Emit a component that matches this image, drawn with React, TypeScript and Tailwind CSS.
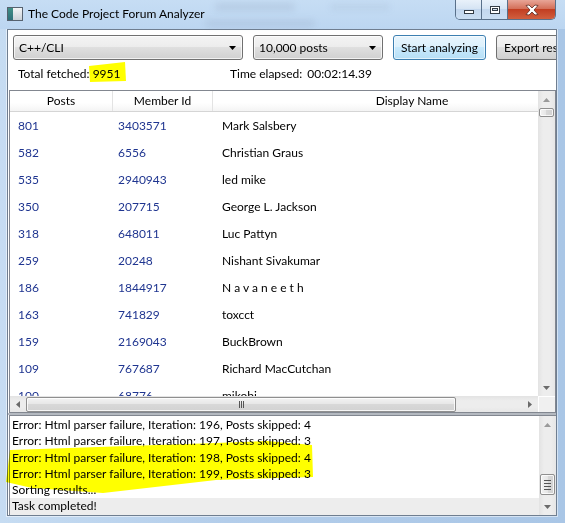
import React from "react";

const rows = [
  ["801", "3403571", "Mark Salsbery"],
  ["582", "6556", "Christian Graus"],
  ["535", "2940943", "led mike"],
  ["350", "207715", "George L. Jackson"],
  ["318", "648011", "Luc Pattyn"],
  ["259", "20248", "Nishant Sivakumar"],
  ["186", "1844917", "N a v a n e e t h"],
  ["163", "741829", "toxcct"],
  ["159", "2169043", "BuckBrown"],
  ["109", "767687", "Richard MacCutchan"],
  ["100", "68776", "mikobi"],
];

const log = [
  "Error: Html parser failure, Iteration: 196, Posts skipped: 4",
  "Error: Html parser failure, Iteration: 197, Posts skipped: 3",
  "Error: Html parser failure, Iteration: 198, Posts skipped: 4",
  "Error: Html parser failure, Iteration: 199, Posts skipped: 3",
  "Sorting results...",
];

function Tri({ dir }: { dir: "up" | "down" | "left" | "right" }) {
  if (dir === "left" || dir === "right") {
    return (
      <svg width="4" height="7" viewBox="0 0 4 7">
        <path d={dir === "left" ? "M4 0 L0 3.5 L4 7 Z" : "M0 0 L4 3.5 L0 7 Z"} fill="#6b6b6b" />
      </svg>
    );
  }
  return (
    <svg width="7" height="4" viewBox="0 0 7 4">
      <path d={dir === "up" ? "M0 4 L3.5 0 L7 4 Z" : "M0 0 L3.5 4 L7 0 Z"} fill={dir === "up" ? "#9a9a9a" : "#6b6b6b"} />
    </svg>
  );
}

function Combo({ label, className }: { label: string; className: string }) {
  return (
    <div
      className={`${className} h-[25px] flex items-center justify-between rounded-[3px] border border-[#707070] bg-[linear-gradient(#f4f4f4,#ececec_50%,#dfdfdf_50%,#d0d0d0)] pl-[5px] pr-[6px] shadow-[inset_0_0_0_1px_rgba(255,255,255,0.7)]`}
    >
      <span>{label}</span>
      <svg width="7" height="4" viewBox="0 0 7 4">
        <path d="M0 0 L3.5 4 L7 0 Z" fill="#000" />
      </svg>
    </div>
  );
}

function Thumb({ className, children }: { className: string; children?: React.ReactNode }) {
  return (
    <div
      className={`${className} flex items-center justify-center rounded-[2px] border border-[#8f8f8f] bg-[linear-gradient(90deg,#f3f3f3,#e6e6e6_50%,#d8d8d8_50%,#d2d2d2)] shadow-[inset_0_0_0_1px_rgba(255,255,255,0.8)]`}
    >
      {children}
    </div>
  );
}

export default function App() {
  return (
    <div className="relative w-[565px] h-[523px] overflow-hidden flex flex-col bg-[linear-gradient(90deg,#c6dcf2,#b3cdea_40%,#a9c6e6)] font-[Lato,'Liberation_Sans',sans-serif] text-[12px] text-black">
      {/* title bar */}
      <div className="relative h-[29px] flex items-start bg-[linear-gradient(#c6ddf4,#bcd6f1)]">
        <div className="absolute left-[215px] top-[3px] w-[80px] h-[8px] rounded-full bg-[#6f829a]/15 blur-[3px]" />
        <div className="absolute left-[205px] top-[20px] w-[110px] h-[7px] rounded-full bg-[#6f829a]/15 blur-[3px]" />
        <div className="absolute left-[330px] top-[4px] w-[60px] h-[6px] rounded-full bg-[#6f829a]/10 blur-[3px]" />
        <div className="mt-[7px] ml-[7px] w-[16px] h-[14px] border border-[#56626f] bg-[#dfe5ea] flex">
          <div className="w-[5px] bg-[linear-gradient(#3f8f86,#2f6f7a)]" />
          <div className="flex-1 bg-[linear-gradient(#f3f5f7,#c9d1d8)]" />
        </div>
        <span className="mt-[6px] ml-[5px] leading-[16px]">The Code Project Forum Analyzer</span>
        <div className="ml-auto mr-[9px] flex h-[20px] rounded-b-[5px] border border-t-0 border-[#59708a] overflow-hidden">
          <div className="w-[26px] flex items-center justify-center border-r border-[#59708a] bg-[linear-gradient(#e9f1fa,#d4e3f3_50%,#c3d7ee_50%,#cadef3)]">
            <div className="w-[10px] h-[4px] mt-[5px] border border-[#333c46] bg-white" />
          </div>
          <div className="w-[26px] flex items-center justify-center border-r border-[#59708a] bg-[linear-gradient(#e9f1fa,#d4e3f3_50%,#c3d7ee_50%,#cadef3)]">
            <div className="w-[10px] h-[8px] border border-[#333c46] bg-white flex items-center justify-center">
              <div className="w-[6px] h-[3px] border border-[#333c46] bg-[#cfdcea]" />
            </div>
          </div>
          <div className="w-[47px] flex items-center justify-center bg-[linear-gradient(#e8a597,#d4705a_45%,#c23e22_50%,#d15f3f)]">
            <svg width="14" height="12" viewBox="0 0 14 12">
              <path
                d="M1 1.5 L4 1 L7 4 L10 1 L13 1.5 L9 6 L13 10.5 L10 11 L7 8 L4 11 L1 10.5 L5 6 Z"
                fill="#fff"
                stroke="#5a2a22"
                strokeWidth="0.8"
              />
            </svg>
          </div>
        </div>
      </div>

      {/* client area */}
      <div className="ml-[7px] mr-[8px] h-[487px] border border-[#6f7e90] bg-white flex flex-col overflow-hidden shadow-[0_0_0_1px_rgba(255,255,255,0.5)]">
        {/* toolbar */}
        <div className="mt-[5px] ml-[5px] flex gap-[10px] h-[25px] shrink-0">
          <Combo label="C++/CLI" className="w-[230px] shrink-0" />
          <Combo label="10,000 posts" className="w-[130px] shrink-0" />
          <div className="w-[93px] shrink-0 h-[25px] flex items-center justify-center rounded-[3px] border border-[#3c7fb1] bg-[linear-gradient(#e8f5fd,#dbf0fc_50%,#c8e9fc_50%,#b6dff6)] shadow-[inset_0_0_0_1px_rgba(255,255,255,0.6)]">
            Start analyzing
          </div>
          <div className="w-[95px] shrink-0 h-[25px] flex items-center pl-[7px] rounded-[3px] border border-[#707070] bg-[linear-gradient(#f4f4f4,#ececec_50%,#dfdfdf_50%,#d0d0d0)] whitespace-nowrap overflow-hidden">
            Export results
          </div>
        </div>

        {/* stats */}
        <div className="h-[30px] shrink-0 flex items-center pl-[10px] pb-[2px]">
          <span className="w-[212px]">
            Total fetched: <span>9951</span>
          </span>
          <span>Time elapsed:</span>
          <span className="ml-[5px]">00:02:14.39</span>
        </div>

        {/* data grid */}
        <div className="ml-[1px] h-[323px] shrink-0 border border-[#828790] flex flex-col">
          <div className="flex h-[305px]">
            <div className="flex-1 overflow-hidden flex flex-col">
              <div className="h-[21px] shrink-0 flex border-b border-[#d5d5d5] bg-[linear-gradient(#ffffff,#ffffff_60%,#f4f4f4)] whitespace-nowrap">
                <div className="w-[103px] shrink-0 flex items-center justify-center border-r border-[#e3e3e3]">Posts</div>
                <div className="w-[100px] shrink-0 flex items-center justify-center border-r border-[#e3e3e3]">Member Id</div>
                <div className="w-[398px] shrink-0 flex items-center justify-center">Display Name</div>
              </div>
              <div className="flex-1 overflow-hidden">
                {rows.map((r) => (
                  <div key={r[0]} className="h-[27px] flex items-center whitespace-nowrap">
                    <div className="w-[103px] shrink-0 pl-[8px] text-[#1f3590]">{r[0]}</div>
                    <div className="w-[100px] shrink-0 pl-[5px] text-[#1f3590]">{r[1]}</div>
                    <div className="pl-[9px]">{r[2]}</div>
                  </div>
                ))}
              </div>
            </div>
            <div className="w-[17px] shrink-0 flex flex-col items-center bg-[linear-gradient(90deg,#e3e3e3,#ededed_30%,#ededed_70%,#e6e6e6)]">
              <div className="h-[17px] flex items-center justify-center">
                <Tri dir="up" />
              </div>
              <Thumb className="w-[15px] h-[9px]" />
              <div className="flex-1" />
              <div className="h-[17px] flex items-center justify-center">
                <Tri dir="down" />
              </div>
            </div>
          </div>
          <div className="flex h-[16px]">
            <div className="flex-1 flex items-center bg-[linear-gradient(#e3e3e3,#ededed_30%,#ededed_70%,#e6e6e6)]">
              <div className="w-[16px] flex items-center justify-center">
                <Tri dir="left" />
              </div>
              <div className="w-[430px] h-[15px] flex items-center justify-center rounded-[2px] border border-[#8f8f8f] bg-[linear-gradient(#f3f3f3,#e6e6e6_50%,#d8d8d8_50%,#d2d2d2)] shadow-[inset_0_0_0_1px_rgba(255,255,255,0.8)]">
                <div className="flex gap-[1px]">
                  <div className="w-[1px] h-[7px] bg-[#555]" />
                  <div className="w-[1px] h-[7px] bg-[#555]" />
                  <div className="w-[1px] h-[7px] bg-[#555]" />
                </div>
              </div>
              <div className="flex-1" />
              <div className="w-[17px] flex items-center justify-center">
                <Tri dir="right" />
              </div>
            </div>
            <div className="w-[17px] bg-[#f0f0f0] border-l border-t border-white" />
          </div>
        </div>

        {/* splitter */}
        <div className="h-[2px] shrink-0 bg-[#b4b9c0]" />

        {/* log */}
        <div className="ml-[1px] flex-1 border-t border-l border-[#828790] flex overflow-hidden">
          <div className="flex-1 flex flex-col pt-[1px]">
            {log.map((l) => (
              <div key={l} className="h-[16.3px] leading-[16px] pl-[2px] whitespace-nowrap">
                {l}
              </div>
            ))}
            <div className="flex-1 leading-[16px] pl-[2px] bg-[#ededed]">Task completed!</div>
          </div>
          <div className="w-[17px] shrink-0 flex flex-col items-center bg-[linear-gradient(90deg,#e3e3e3,#ededed_30%,#ededed_70%,#e6e6e6)]">
            <div className="h-[17px] flex items-center justify-center">
              <Tri dir="up" />
            </div>
            <div className="flex-1" />
            <Thumb className="w-[15px] h-[21px] mb-[3px] flex-col gap-[2px]">
              <div className="w-[7px] h-[1px] bg-[#555]" />
              <div className="w-[7px] h-[1px] bg-[#555]" />
              <div className="w-[7px] h-[1px] bg-[#555]" />
              <div className="w-[7px] h-[1px] bg-[#555]" />
            </Thumb>
            <div className="h-[17px] flex items-center justify-center">
              <Tri dir="down" />
            </div>
          </div>
        </div>
      </div>

      {/* marker highlights drawn over the screenshot */}
      <svg
        className="absolute inset-0 pointer-events-none mix-blend-multiply"
        width="565"
        height="523"
        viewBox="0 0 565 523"
      >
        <path d="M89 66 L125 62 L126 81 L90 82 Z" fill="#ffff00" />
        <path
          d="M10 450 L216 443 L267 441 L312 445 L313 477 L216 480 L103 493 L32 488 L6 482 L8 466 Z"
          fill="#ffff00"
        />
      </svg>
    </div>
  );
}
